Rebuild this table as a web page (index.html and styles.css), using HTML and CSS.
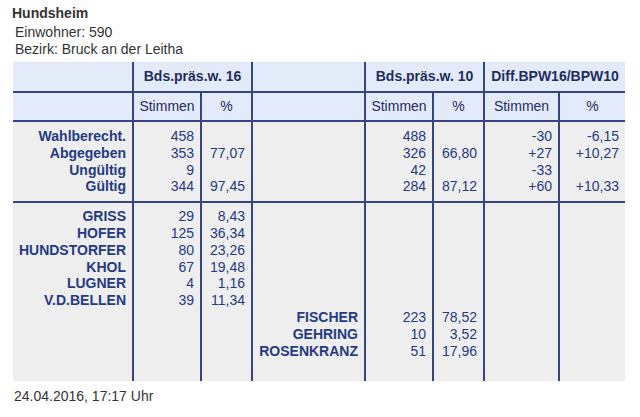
FILE: index.html
```html
<!DOCTYPE html>
<html lang="de">
<head>
<meta charset="utf-8">
<link rel="stylesheet" href="styles.css">
</head>
<body>
<div class="page">
  <h1 class="title">Hundsheim</h1>
  <div class="info">Einwohner: 590<br>Bezirk: Bruck an der Leitha</div>
  <table class="results">
    <colgroup>
      <col class="c-label"><col class="c-st"><col class="c-pc">
      <col class="c-label2"><col class="c-st"><col class="c-pc">
      <col class="c-dst"><col class="c-dpc">
    </colgroup>
    <thead>
      <tr class="h1row">
        <th class="blank"></th>
        <th colspan="2" class="grp">Bds.präs.w. 16</th>
        <th class="blank"></th>
        <th colspan="2" class="grp">Bds.präs.w. 10</th>
        <th colspan="2" class="grp">Diff.BPW16/BPW10</th>
      </tr>
      <tr class="h2row">
        <th class="blank"></th>
        <th class="sub">Stimmen</th>
        <th class="sub">%</th>
        <th class="blank"></th>
        <th class="sub">Stimmen</th>
        <th class="sub">%</th>
        <th class="sub">Stimmen</th>
        <th class="sub">%</th>
      </tr>
    </thead>
    <tbody>
      <tr class="block1">
        <td class="lbl">Wahlberecht.<br>Abgegeben<br>Ungültig<br>Gültig</td>
        <td class="num">458<br>353<br>9<br>344</td>
        <td class="num"><br>77,07<br><br>97,45</td>
        <td class="lbl"></td>
        <td class="num">488<br>326<br>42<br>284</td>
        <td class="num"><br>66,80<br><br>87,12</td>
        <td class="num">-30<br>+27<br>-33<br>+60</td>
        <td class="num">-6,15<br>+10,27<br><br>+10,33</td>
      </tr>
      <tr class="block2">
        <td class="lbl">GRISS<br>HOFER<br>HUNDSTORFER<br>KHOL<br>LUGNER<br>V.D.BELLEN</td>
        <td class="num">29<br>125<br>80<br>67<br>4<br>39</td>
        <td class="num">8,43<br>36,34<br>23,26<br>19,48<br>1,16<br>11,34</td>
        <td class="lbl"><br><br><br><br><br><br>FISCHER<br>GEHRING<br>ROSENKRANZ</td>
        <td class="num"><br><br><br><br><br><br>223<br>10<br>51</td>
        <td class="num"><br><br><br><br><br><br>78,52<br>3,52<br>17,96</td>
        <td class="num"></td>
        <td class="num"></td>
      </tr>
    </tbody>
  </table>
  <div class="stamp">24.04.2016, 17:17 Uhr</div>
</div>
</body>
</html>
```
FILE: styles.css
```css
html, body {
  margin: 0;
  padding: 0;
  background: #ffffff;
}

.page {
  padding: 5px 0 0 13px;
  font-family: "Liberation Sans", Arial, Helvetica, sans-serif;
  font-size: 14px;
  line-height: 17px;
  color: #333333;
}

.title {
  margin: 0 0 2px -1px;
  font-size: 14px;
  line-height: 17px;
  font-weight: bold;
  color: #333333;
}

.info {
  padding-left: 2px;
  line-height: 17px;
}

.results {
  margin-top: 4px;
  border-collapse: collapse;
  table-layout: fixed;
  width: 612px;
  font-size: 14px;
  line-height: 16.8px;
}

.c-label { width: 120px; }
.c-st { width: 68px; }
.c-pc { width: 51px; }
.c-label2 { width: 113px; }
.c-dst { width: 75px; }
.c-dpc { width: 66px; }

.results th,
.results td {
  border-left: 2px solid #34467f;
  border-right: 2px solid #34467f;
  padding: 0;
}

.results tr > :first-child { border-left: none; }
.results tr > :last-child { border-right: none; }

.results thead th {
  background: #e3eafa;
  color: #1f2d5c;
  text-align: center;
  vertical-align: middle;
}

.h1row th {
  height: 29px;
  border-bottom: 2px solid #34467f;
  font-weight: bold;
}

.h2row th {
  height: 27px;
  border-bottom: 2px solid #34467f;
  font-weight: normal;
}

.results tbody td {
  background: #eeeeee;
  color: #233a82;
  vertical-align: top;
}

.block1 td {
  padding-top: 6px;
  padding-bottom: 6px;
  border-bottom: 2px solid #34467f;
}

.block2 td {
  padding-top: 5px;
  padding-bottom: 22px;
}

.results .lbl {
  text-align: right;
  font-weight: bold;
  padding-right: 6px;
}

.results .num {
  text-align: right;
  padding-right: 6px;
}

.stamp {
  margin-top: 7px;
  padding-left: 1px;
  color: #333333;
}
```
